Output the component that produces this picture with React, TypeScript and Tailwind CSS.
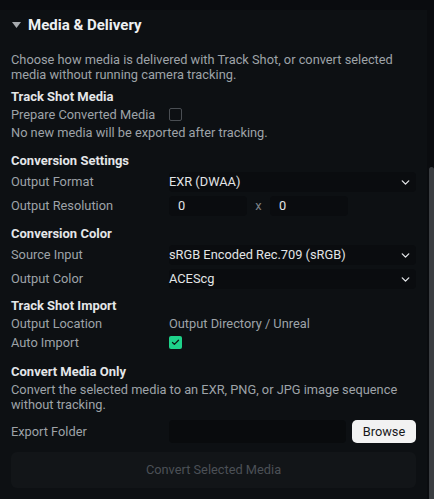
import { ChevronDown, Check } from "lucide-react";

const font = { fontFamily: "Roboto, 'Liberation Sans', sans-serif" };

function Label({ children }: { children: React.ReactNode }) {
    return <div className="w-[158px] shrink-0 text-[12.8px] text-[#9ea3a8]">{children}</div>;
}

function SectionTitle({ children }: { children: React.ReactNode }) {
    return <div className="text-[13px] font-bold text-[#e4e6e8] leading-[16px]">{children}</div>;
}

function SelectRow({ label, value }: { label: string; value: string }) {
    return (
        <div className="flex h-[20px] items-center">
            <Label>{label}</Label>
            <div className="flex h-[20px] flex-1 items-center justify-between rounded-[4px] bg-[#0a0c0f] pr-[4px] text-[12.8px] text-[#e2e4e6]">
                <span>{value}</span>
                <ChevronDown size={13} strokeWidth={2.5} className="text-[#e2e4e6]" />
            </div>
        </div>
    );
}

export default function App() {
    return (
        <div className="flex h-[499px] w-[434px] overflow-hidden bg-[#0a0c0f]" style={font}>
            <div className="flex-1 pt-[10px]">
                <div className="h-full bg-[#0d1013] px-[11px] pt-[4px]">
                    <div className="flex h-[22px] items-center gap-[7px]">
                        <svg width="9" height="6" viewBox="0 0 9 6" className="ml-[1px]">
                            <path d="M0 0 H9 L4.5 6 Z" fill="#a6aaae" />
                        </svg>
                        <span className="text-[15px] font-bold text-[#eef0f2]">Media &amp; Delivery</span>
                    </div>

                    <p className="mt-[16px] text-[12.8px] leading-[15px] text-[#9ea3a8]">
                        Choose how media is delivered with Track Shot, or convert selected media without running camera tracking.
                    </p>

                    <div className="mt-[7px]">
                        <SectionTitle>Track Shot Media</SectionTitle>
                        <div className="flex h-[19px] items-center">
                            <Label>Prepare Converted Media</Label>
                            <div className="h-[13px] w-[13px] rounded-[2px] border border-[#4a4e53]" />
                        </div>
                        <div className="flex h-[18px] items-center text-[12.8px] text-[#9ea3a8]">
                            No new media will be exported after tracking.
                        </div>
                    </div>

                    <div className="mt-[11px]">
                        <SectionTitle>Conversion Settings</SectionTitle>
                        <div className="mt-[3px] flex flex-col gap-[4px]">
                            <SelectRow label="Output Format" value="EXR (DWAA)" />
                            <div className="flex h-[20px] items-center">
                                <Label>Output Resolution</Label>
                                <div className="flex h-[20px] w-[78px] items-center rounded-[4px] bg-[#0a0c0f] pl-[9px] text-[12.8px] text-[#e2e4e6]">0</div>
                                <span className="w-[23px] text-center text-[12.8px] text-[#7d8287]">x</span>
                                <div className="flex h-[20px] w-[78px] items-center rounded-[4px] bg-[#0a0c0f] pl-[9px] text-[12.8px] text-[#e2e4e6]">0</div>
                            </div>
                        </div>
                    </div>

                    <div className="mt-[10px]">
                        <SectionTitle>Conversion Color</SectionTitle>
                        <div className="mt-[3px] flex flex-col gap-[4px]">
                            <SelectRow label="Source Input" value="sRGB Encoded Rec.709 (sRGB)" />
                            <SelectRow label="Output Color" value="ACEScg" />
                        </div>
                    </div>

                    <div className="mt-[9px]">
                        <SectionTitle>Track Shot Import</SectionTitle>
                        <div className="flex h-[19px] items-center">
                            <Label>Output Location</Label>
                            <span className="text-[12.8px] text-[#9ea3a8]">Output Directory / Unreal</span>
                        </div>
                        <div className="flex h-[19px] items-center">
                            <Label>Auto Import</Label>
                            <div className="flex h-[13px] w-[13px] items-center justify-center rounded-[2px] bg-[#1ed28a]">
                                <Check size={9} strokeWidth={3.5} className="text-[#0b1a13]" />
                            </div>
                        </div>
                    </div>

                    <div className="mt-[12px]">
                        <SectionTitle>Convert Media Only</SectionTitle>
                        <p className="mt-[2px] text-[12.8px] leading-[15px] text-[#9ea3a8]">
                            Convert the selected media to an EXR, PNG, or JPG image sequence without tracking.
                        </p>
                        <div className="mt-[8px] flex h-[23px] items-center">
                            <Label>Export Folder</Label>
                            <div className="h-[23px] flex-1 rounded-[4px] bg-[#090b0d]" />
                            <button className="ml-[6px] h-[23px] w-[64px] rounded-[5px] bg-[#f2f2f2] text-[12.8px] text-[#16181a]">
                                Browse
                            </button>
                        </div>
                        <button className="mt-[9px] h-[36px] w-full rounded-[6px] bg-[#121518] text-[12.8px] text-[#4b5056]">
                            Convert Selected Media
                        </button>
                    </div>
                </div>
            </div>
            <div className="flex w-[7px] flex-col pt-[167px]">
                <div className="ml-[2px] flex-1 rounded-t-[3px] bg-[#3a3d41]" />
            </div>
        </div>
    );
}
